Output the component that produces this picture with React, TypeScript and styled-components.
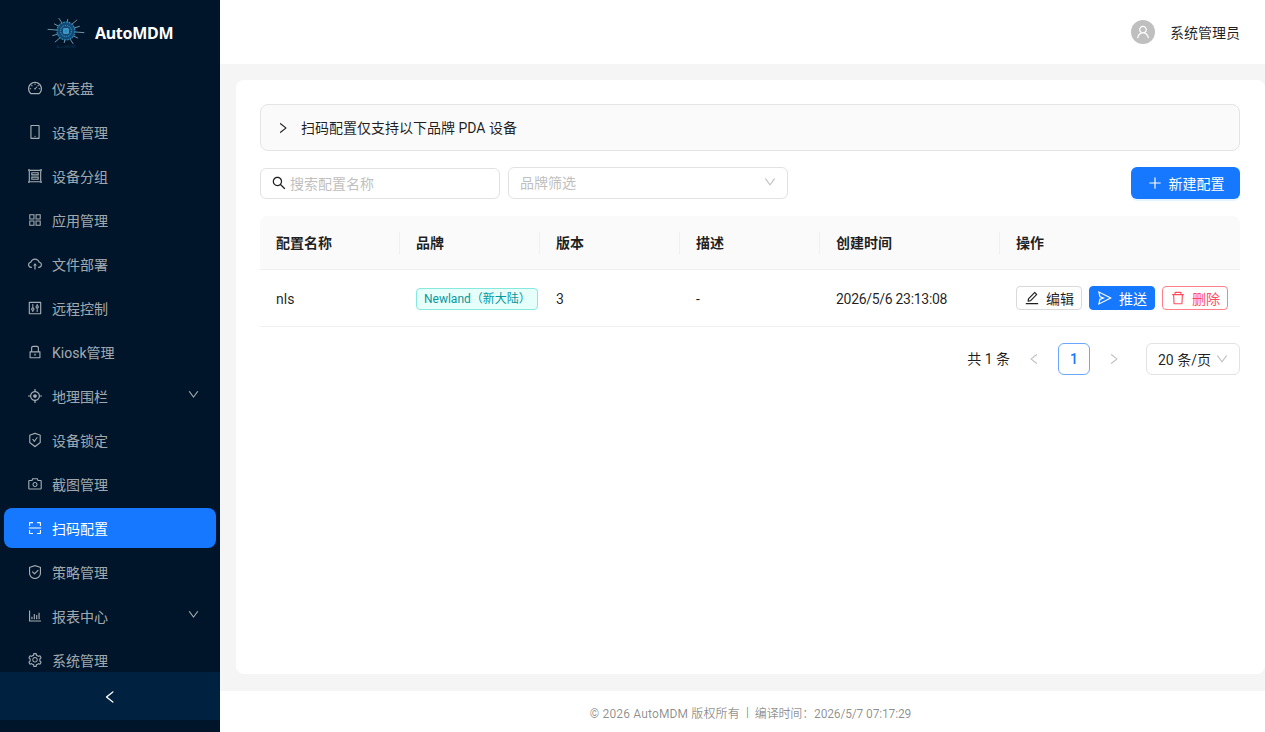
import styled, { createGlobalStyle } from "styled-components";
import type { ComponentType } from "react";
import {
  AiOutlineAim, AiOutlineAppstore, AiOutlineBarChart, AiOutlineCamera, AiOutlineCloudUpload,
  AiOutlineControl, AiOutlineDashboard, AiOutlineDelete, AiOutlineDown, AiOutlineEdit,
  AiOutlineGroup, AiOutlineLeft, AiOutlineLock, AiOutlineMobile, AiOutlinePlus, AiOutlineRight,
  AiOutlineSafety, AiOutlineSafetyCertificate, AiOutlineScan, AiOutlineSearch, AiOutlineSend,
  AiOutlineSetting, AiOutlineUser,
} from "react-icons/ai";

const GlobalStyle = createGlobalStyle`
  html, body { margin: 0; padding: 0; height: 100%; overflow: hidden; }
  body {
    font-family: Roboto, "Noto Sans CJK SC", sans-serif;
    font-size: 14px;
    color: rgba(0, 0, 0, 0.88);
  }
  * { box-sizing: border-box; }
`;

const Shell = styled.div`
  display: flex;
  width: 1265px;
  height: 732px;
  overflow: hidden;
  background: #f5f5f5;
`;

/* sidebar */
const Sider = styled.aside`
  flex: 0 0 220px;
  display: flex;
  flex-direction: column;
  padding-bottom: 12px;
  background: #001529;
`;

const Brand = styled.div`
  flex: 0 0 64px;
  display: flex;
  align-items: center;
  padding: 2px 0 0 46px;
  gap: 9px;
  font-family: "Noto Sans", sans-serif;
  font-size: 16px;
  font-weight: 700;
  letter-spacing: -0.3px;
  color: #fff;
`;

const Menu = styled.nav`
  flex: 1;
  min-height: 0;
  overflow: hidden;
  padding-top: 4px;
`;

const MenuItem = styled.div<{ $active?: boolean }>`
  display: flex;
  align-items: center;
  height: 40px;
  margin: 0 4px 4px;
  padding: 0 16px 0 23px;
  border-radius: 8px;
  gap: 9px;
  background: ${(p) => (p.$active ? "#1677ff" : "transparent")};
  color: ${(p) => (p.$active ? "#fff" : "rgba(255, 255, 255, 0.65)")};

  svg { font-size: 16px; flex: none; }
  span { flex: 1; white-space: nowrap; }
`;

const Chevron = styled(AiOutlineDown)`
  && { font-size: 13px; margin: 0 0 4px; }
`;

const Trigger = styled.div`
  flex: 0 0 48px;
  display: flex;
  align-items: center;
  justify-content: center;
  padding-top: 2px;
  background: #002140;
  color: #fff;
  font-size: 16px;
`;

/* main column */
const Main = styled.div`
  flex: 1;
  min-width: 0;
  display: flex;
  flex-direction: column;
`;

const Header = styled.header`
  flex: 0 0 64px;
  display: flex;
  align-items: center;
  justify-content: flex-end;
  gap: 15px;
  padding-right: 25px;
  background: #fff;
`;

const Avatar = styled.div`
  width: 24px;
  height: 24px;
  border-radius: 50%;
  display: flex;
  align-items: center;
  justify-content: center;
  background: rgba(0, 0, 0, 0.25);
  color: #fff;
  font-size: 16px;
`;

const Content = styled.main`
  flex: 1;
  min-height: 0;
  padding: 16px 0 17px 16px;
  display: flex;
`;

const Card = styled.section`
  flex: 1;
  min-width: 0;
  padding: 24px 25px 24px 24px;
  border-radius: 8px;
  background: #fff;
`;

const Notice = styled.div`
  display: flex;
  align-items: center;
  gap: 11px;
  height: 47px;
  padding: 0 0 2px 15px;
  margin-bottom: 16px;
  border: 1px solid #e4e4e4;
  border-radius: 8px;
  background: #fafafa;

  svg { font-size: 14px; margin-top: 2px; }
`;

const Toolbar = styled.div`
  display: flex;
  align-items: center;
  gap: 8px;
  height: 32px;
  margin-bottom: 17px;
`;

const SearchBox = styled.div`
  display: flex;
  align-items: center;
  gap: 3px;
  width: 240px;
  height: 31px;
  margin-top: 1px;
  padding: 0 11px 1px 10px;
  border: 1px solid #e2e2e2;
  border-radius: 6px;
  color: #bfbfbf;

  svg { font-size: 16px; color: rgba(0, 0, 0, 0.88); flex: none; }
`;

const SelectBox = styled.div<{ $width: number; $filled?: boolean }>`
  display: flex;
  align-items: center;
  justify-content: space-between;
  width: ${(p) => p.$width}px;
  height: 32px;
  padding: 0 10px ${(p) => (p.$filled ? 0 : 2)}px 11px;
  border: 1px solid #e2e2e2;
  border-radius: 6px;
  color: ${(p) => (p.$filled ? "rgba(0, 0, 0, 0.88)" : "#bfbfbf")};

  svg { font-size: 14px; color: #bfbfbf; flex: none; }
`;

const PrimaryButton = styled.button`
  display: flex;
  align-items: center;
  justify-content: center;
  gap: 6px;
  width: 109px;
  height: 32px;
  margin-left: auto;
  padding: 0;
  border: 0;
  border-radius: 6px;
  background: #1677ff;
  box-shadow: 0 2px 0 rgba(5, 145, 255, 0.1);
  color: #fff;
  font: inherit;

  svg { font-size: 16px; }
`;

const Table = styled.table`
  width: 980px;
  table-layout: fixed;
  border-collapse: separate;
  border-spacing: 0;
`;

const HeadCell = styled.th<{ $width: number }>`
  position: relative;
  width: ${(p) => p.$width}px;
  height: 54px;
  padding: 0 16px 2px;
  text-align: left;
  font-weight: 600;
  background: #fafafa;
  border-bottom: 1px solid #f0f0f0;

  &:first-child { border-top-left-radius: 8px; }
  &:last-child { border-top-right-radius: 8px; }

  &:not(:last-child)::after {
    content: "";
    position: absolute;
    top: 16px;
    right: 0;
    width: 1px;
    height: 22px;
    background: #f0f0f0;
  }
`;

const Cell = styled.td`
  height: 57px;
  padding: 0 16px;
  border-bottom: 1px solid #f0f0f0;
  white-space: nowrap;
`;

const TextCell = styled(Cell)`
  padding-top: 2px;
`;

const TimeCell = styled(TextCell)`
  letter-spacing: -0.3px;
`;

const Tag = styled.span`
  display: block;
  width: 122px;
  height: 22px;
  margin-top: 1px;
  line-height: 20px;
  padding: 0 7px;
  border: 1px solid #87e8de;
  border-radius: 4px;
  background: #e6fffb;
  color: #08979c;
  font-size: 12px;
  white-space: nowrap;
`;

const Actions = styled.div`
  display: flex;
  gap: 7px;
`;

const tones = {
  plain: { bg: "#fff", border: "#d9d9d9", color: "rgba(0, 0, 0, 0.88)" },
  primary: { bg: "#1677ff", border: "#1677ff", color: "#fff" },
  danger: { bg: "#fff", border: "#ff7f8a", color: "#ff4d5f" },
};

const SmallButton = styled.button<{ $tone: keyof typeof tones }>`
  flex: none;
  display: flex;
  align-items: center;
  justify-content: center;
  gap: 6px;
  width: 66px;
  height: 24px;
  padding: 0;
  border: 1px solid ${(p) => tones[p.$tone].border};
  border-radius: 4px;
  background: ${(p) => tones[p.$tone].bg};
  color: ${(p) => tones[p.$tone].color};
  font: inherit;

  svg { font-size: 16px; flex: none; }
`;

const Pager = styled.div`
  display: flex;
  align-items: center;
  justify-content: flex-end;
  height: 32px;
  margin-top: 16px;
`;

const PagerTotal = styled.span`
  margin: 0 8px 3px 0;
`;

const PagerArrow = styled.div`
  display: flex;
  align-items: center;
  justify-content: center;
  width: 32px;
  height: 32px;
  margin-right: 8px;
  color: rgba(0, 0, 0, 0.25);
  font-size: 14px;
`;

const PagerCurrent = styled.div`
  display: flex;
  align-items: center;
  justify-content: center;
  width: 32px;
  height: 32px;
  margin-right: 8px;
  border: 1px solid #69a7ff;
  border-radius: 6px;
  color: #1677ff;
  font-weight: 500;
`;

const PageSize = styled(SelectBox)`
  margin-left: 8px;
`;

const Footer = styled.footer`
  flex: 0 0 41px;
  display: flex;
  align-items: center;
  justify-content: center;
  padding: 1px 0 0 16px;
  background: #fff;
  color: rgba(0, 0, 0, 0.45);
  font-size: 12px;
`;

const FooterPart = styled.span<{ $spacing: number }>`
  letter-spacing: ${(p) => p.$spacing}px;
`;

const FooterDivider = styled.span`
  margin: 0 3px;
`;

function Logo() {
  const rays = Array.from({ length: 12 }, (_, i) => (i * Math.PI) / 6 + 0.12);
  return (
    <svg width="40" height="36" viewBox="0 0 40 36" fill="none">
      {rays.map((a, i) => (
        <line
          key={a}
          x1={20 + 6 * Math.cos(a)}
          y1={16 + 6 * Math.sin(a)}
          x2={20 + (i % 2 ? 15 : 18.5) * Math.cos(a)}
          y2={16 + (i % 2 ? 12 : 14) * Math.sin(a)}
          stroke="#8fb4c4"
          strokeWidth="0.8"
        />
      ))}
      <circle cx="20" cy="16" r="9" fill="#134a75" stroke="#2f8fc0" strokeWidth="1.1" strokeDasharray="2 0.8" />
      <circle cx="20" cy="16" r="5.5" stroke="#38a8dc" strokeWidth="0.9" strokeDasharray="1.4 1" />
      <rect x="17.8" y="13.8" width="4.4" height="4.4" fill="#2b8fc4" stroke="#7fd0ee" strokeWidth="0.6" />
      <text x="20" y="33" textAnchor="middle" fontSize="4" fontWeight="400" letterSpacing="0" fill="#0f3556">
        AutoMDM
      </text>
    </svg>
  );
}

type NavEntry = { label: string; icon: ComponentType; active?: boolean; more?: boolean };

const nav: NavEntry[] = [
  { label: "仪表盘", icon: AiOutlineDashboard },
  { label: "设备管理", icon: AiOutlineMobile },
  { label: "设备分组", icon: AiOutlineGroup },
  { label: "应用管理", icon: AiOutlineAppstore },
  { label: "文件部署", icon: AiOutlineCloudUpload },
  { label: "远程控制", icon: AiOutlineControl },
  { label: "Kiosk管理", icon: AiOutlineLock },
  { label: "地理围栏", icon: AiOutlineAim, more: true },
  { label: "设备锁定", icon: AiOutlineSafetyCertificate },
  { label: "截图管理", icon: AiOutlineCamera },
  { label: "扫码配置", icon: AiOutlineScan, active: true },
  { label: "策略管理", icon: AiOutlineSafety },
  { label: "报表中心", icon: AiOutlineBarChart, more: true },
  { label: "系统管理", icon: AiOutlineSetting },
];

const columns = [
  { title: "配置名称", width: 140 },
  { title: "品牌", width: 140 },
  { title: "版本", width: 140 },
  { title: "描述", width: 140 },
  { title: "创建时间", width: 180 },
  { title: "操作", width: 240 },
];

export default function App() {
  return (
    <Shell>
      <GlobalStyle />
      <Sider>
        <Brand>
          <Logo />
          AutoMDM
        </Brand>
        <Menu>
          {nav.map(({ label, icon: Icon, active, more }) => (
            <MenuItem key={label} $active={active}>
              <Icon />
              <span>{label}</span>
              {more && <Chevron />}
            </MenuItem>
          ))}
        </Menu>
        <Trigger>
          <AiOutlineLeft />
        </Trigger>
      </Sider>
      <Main>
        <Header>
          <Avatar>
            <AiOutlineUser />
          </Avatar>
          <span>系统管理员</span>
        </Header>
        <Content>
          <Card>
            <Notice>
              <AiOutlineRight />
              扫码配置仅支持以下品牌 PDA 设备
            </Notice>
            <Toolbar>
              <SearchBox>
                <AiOutlineSearch />
                搜索配置名称
              </SearchBox>
              <SelectBox $width={280}>
                品牌筛选
                <AiOutlineDown />
              </SelectBox>
              <PrimaryButton>
                <AiOutlinePlus />
                新建配置
              </PrimaryButton>
            </Toolbar>
            <Table>
              <thead>
                <tr>
                  {columns.map((c) => (
                    <HeadCell key={c.title} $width={c.width}>
                      {c.title}
                    </HeadCell>
                  ))}
                </tr>
              </thead>
              <tbody>
                <tr>
                  <TextCell>nls</TextCell>
                  <Cell>
                    <Tag>Newland（新大陆）</Tag>
                  </Cell>
                  <TextCell>3</TextCell>
                  <TextCell>-</TextCell>
                  <TimeCell>2026/5/6 23:13:08</TimeCell>
                  <Cell>
                    <Actions>
                      <SmallButton $tone="plain">
                        <AiOutlineEdit />
                        编辑
                      </SmallButton>
                      <SmallButton $tone="primary">
                        <AiOutlineSend />
                        推送
                      </SmallButton>
                      <SmallButton $tone="danger">
                        <AiOutlineDelete />
                        删除
                      </SmallButton>
                    </Actions>
                  </Cell>
                </tr>
              </tbody>
            </Table>
            <Pager>
              <PagerTotal>共 1 条</PagerTotal>
              <PagerArrow>
                <AiOutlineLeft />
              </PagerArrow>
              <PagerCurrent>1</PagerCurrent>
              <PagerArrow>
                <AiOutlineRight />
              </PagerArrow>
              <PageSize $width={94} $filled>
                20 条/页
                <AiOutlineDown />
              </PageSize>
            </Pager>
          </Card>
        </Content>
        <Footer>
          <FooterPart $spacing={0.15}>© 2026 AutoMDM 版权所有</FooterPart>
          <FooterDivider>&nbsp;|&nbsp;</FooterDivider>
          <FooterPart $spacing={-0.15}>编译时间：2026/5/7 07:17:29</FooterPart>
        </Footer>
      </Main>
    </Shell>
  );
}
